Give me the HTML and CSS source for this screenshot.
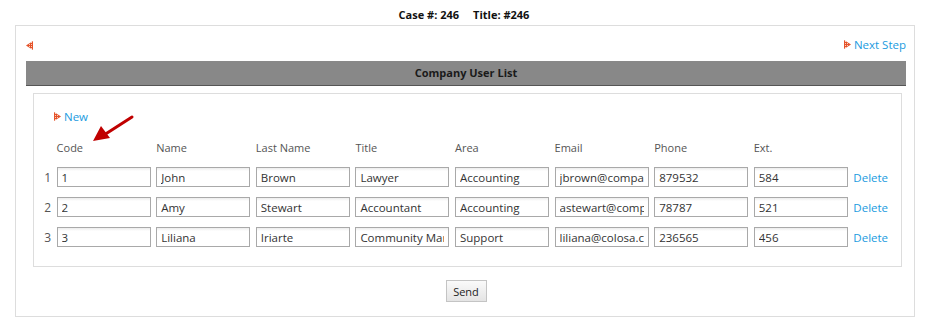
FILE: index.html
```html
<!DOCTYPE html>
<html lang="en">
<head>
    <meta charset="UTF-8">
    <meta name="viewport" content="width=device-width, initial-scale=1.0">
    <title>Company User List</title>
    <link rel="stylesheet" href="styles.css">
</head>
<body>
    <div class="case-header">
        <span>Case #: 246</span>
        <span>Title: #246</span>
    </div>

    <div class="form-box">
        <div class="toolbar">
            <a href="#" class="back-link" title="Back">
                <svg width="7" height="9" viewBox="0 0 7 9">
                    <polygon points="7,0 0,4.5 7,9" fill="#e5532b"/>
                    <rect x="5" y="1" width="1" height="1" fill="#fbd0bd"/>
                    <rect x="3" y="3" width="1" height="1" fill="#fbd0bd"/>
                    <rect x="5" y="3" width="1" height="1" fill="#fbd0bd"/>
                    <rect x="5" y="5" width="1" height="1" fill="#fbd0bd"/>
                    <rect x="3" y="5" width="1" height="1" fill="#fbd0bd"/>
                    <rect x="5" y="7" width="1" height="1" fill="#fbd0bd"/>
                </svg>
            </a>
            <a href="#" class="link">
                <svg class="arrow-icon" width="7" height="9" viewBox="0 0 7 9">
                    <polygon points="0,0 7,4.5 0,9" fill="#e5532b"/>
                    <rect x="1" y="1" width="1" height="1" fill="#fbd0bd"/>
                    <rect x="1" y="3" width="1" height="1" fill="#fbd0bd"/>
                    <rect x="3" y="3" width="1" height="1" fill="#fbd0bd"/>
                    <rect x="1" y="5" width="1" height="1" fill="#fbd0bd"/>
                    <rect x="3" y="5" width="1" height="1" fill="#fbd0bd"/>
                    <rect x="1" y="7" width="1" height="1" fill="#fbd0bd"/>
                </svg>Next Step
            </a>
        </div>

        <div class="section-title">Company User List</div>

        <div class="grid-box">
            <a href="#" class="link new-link">
                <svg class="arrow-icon" width="7" height="9" viewBox="0 0 7 9">
                    <polygon points="0,0 7,4.5 0,9" fill="#e5532b"/>
                    <rect x="1" y="1" width="1" height="1" fill="#fbd0bd"/>
                    <rect x="1" y="3" width="1" height="1" fill="#fbd0bd"/>
                    <rect x="3" y="3" width="1" height="1" fill="#fbd0bd"/>
                    <rect x="1" y="5" width="1" height="1" fill="#fbd0bd"/>
                    <rect x="3" y="5" width="1" height="1" fill="#fbd0bd"/>
                    <rect x="1" y="7" width="1" height="1" fill="#fbd0bd"/>
                </svg>New
            </a>

            <svg class="pointer" width="44" height="30" viewBox="0 0 44 30">
                <line x1="41" y1="2" x2="13" y2="20" stroke="#c00000" stroke-width="3" stroke-linecap="round"/>
                <polygon points="2,26 10,11 19,23" fill="#c00000"/>
            </svg>

            <div class="user-grid">
                <span></span>
                <span class="col-head">Code</span>
                <span class="col-head">Name</span>
                <span class="col-head">Last Name</span>
                <span class="col-head">Title</span>
                <span class="col-head">Area</span>
                <span class="col-head">Email</span>
                <span class="col-head">Phone</span>
                <span class="col-head">Ext.</span>
                <span></span>

                <span class="row-num">1</span>
                <input type="text" value="1">
                <input type="text" value="John">
                <input type="text" value="Brown">
                <input type="text" value="Lawyer">
                <input type="text" value="Accounting">
                <input type="text" value="jbrown@company.com">
                <input type="text" value="879532">
                <input type="text" value="584">
                <a href="#" class="link">Delete</a>

                <span class="row-num">2</span>
                <input type="text" value="2">
                <input type="text" value="Amy">
                <input type="text" value="Stewart">
                <input type="text" value="Accountant">
                <input type="text" value="Accounting">
                <input type="text" value="astewart@company.com">
                <input type="text" value="78787">
                <input type="text" value="521">
                <a href="#" class="link">Delete</a>

                <span class="row-num">3</span>
                <input type="text" value="3">
                <input type="text" value="Liliana">
                <input type="text" value="Iriarte">
                <input type="text" value="Community Manager">
                <input type="text" value="Support">
                <input type="text" value="liliana@colosa.com">
                <input type="text" value="236565">
                <input type="text" value="456">
                <a href="#" class="link">Delete</a>
            </div>
        </div>

        <div class="actions">
            <button type="button" class="send-btn">Send</button>
        </div>
    </div>
</body>
</html>
```

FILE: styles.css
```css
body {
    font-family: 'Open Sans', 'Segoe UI', Tahoma, sans-serif;
    font-size: 11px;
    color: #333;
    background-color: #fff;
    margin: 0;
}
.case-header {
    height: 25px;
    display: flex;
    justify-content: center;
    align-items: center;
    gap: 14px;
    padding-top: 3px;
    box-sizing: border-box;
    font-weight: 700;
    color: #111;
}
.form-box {
    width: 900px;
    margin-left: 15px;
    box-sizing: border-box;
    border: 1px solid #ddd;
    padding: 0 8px 14px 10px;
}
.toolbar {
    height: 35px;
    display: flex;
    justify-content: space-between;
    align-items: center;
    padding-top: 2px;
    box-sizing: border-box;
}
.back-link {
    display: flex;
    margin-top: 1px;
}
.link {
    color: #1b9be0;
    text-decoration: none;
    font-size: 11.5px;
    display: inline-flex;
    align-items: center;
}
.arrow-icon {
    margin-right: 3px;
}
.section-title {
    height: 24px;
    line-height: 24px;
    background-color: #888;
    border-bottom: 1px solid #555;
    text-align: center;
    font-weight: 700;
    color: #1a1a1a;
}
.grid-box {
    position: relative;
    width: 869px;
    margin: 7px 0 0 7px;
    box-sizing: border-box;
    border: 1px solid #ddd;
    padding: 14px 0 19px 3px;
}
.new-link {
    height: 16px;
    margin-left: 17px;
}
.pointer {
    position: absolute;
    left: 57px;
    top: 21px;
}
.user-grid {
    display: grid;
    grid-template-columns: 14px repeat(8, 94px) auto;
    grid-auto-rows: 20px;
    column-gap: 5.6px;
    row-gap: 10px;
    align-items: center;
    margin-top: 13px;
}
.col-head {
    color: #555;
}
.row-num {
    text-align: right;
    color: #555;
    font-size: 12px;
}
.user-grid input {
    width: 94px;
    height: 20px;
    box-sizing: border-box;
    border: 1px solid #a9a9a9;
    padding: 0 4px;
    font-family: inherit;
    font-size: 11.5px;
    color: #333;
    background: linear-gradient(#ececec 0, #fff 3px);
    outline: none;
}
.actions {
    display: flex;
    justify-content: center;
    padding-top: 13px;
}
.send-btn {
    width: 41px;
    height: 22px;
    padding: 0;
    font-family: inherit;
    font-size: 11px;
    color: #222;
    border: 1px solid #c4c4c4;
    background: linear-gradient(#fafafa, #e4e4e4);
}
```
